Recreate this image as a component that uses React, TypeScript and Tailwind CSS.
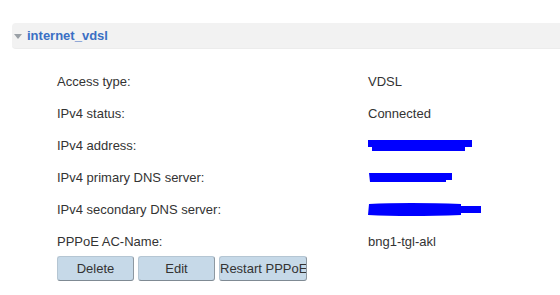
const rows: { label: string; value?: string; redact?: "address" | "primary" | "secondary" }[] = [
  { label: "Access type:", value: "VDSL" },
  { label: "IPv4 status:", value: "Connected" },
  { label: "IPv4 address:", redact: "address" },
  { label: "IPv4 primary DNS server:", redact: "primary" },
  { label: "IPv4 secondary DNS server:", redact: "secondary" },
  { label: "PPPoE AC-Name:", value: "bng1-tgl-akl" },
];

const Redaction = ({ kind }: { kind: "address" | "primary" | "secondary" }) => {
  if (kind === "address") {
    return (
      <svg width="110" height="14" viewBox="0 0 110 14">
        <path d="M0 1 L104 1 L104 8 L97 8 L97 12 L4 12 L4 8 L0 8 Z" fill="#0000ff" />
      </svg>
    );
  }
  if (kind === "primary") {
    return (
      <svg width="90" height="12" viewBox="0 0 90 12">
        <path d="M1 1 L84 1 L84 8 L78 8 L78 10 L2 10 Z" fill="#0000ff" />
      </svg>
    );
  }
  return (
    <svg width="120" height="18" viewBox="0 0 120 18">
      <path d="M1 3 Q40 1 93 3 L93 5 L113 5 L113 12 L93 12 L93 14 Q40 16 0 14 Z" fill="#0000ff" />
    </svg>
  );
};

const App: React.FC = () => {
  return (
    <div className="w-[560px] h-[295px] bg-white font-['Liberation_Sans',Arial,sans-serif] overflow-hidden pt-[23px]">
      <div className="ml-3 h-[26px] bg-[#f2f2f2] rounded-l-[4px] border-b border-[#ececec] flex items-center">
        <span className="ml-[2px] w-0 h-0 border-l-[4px] border-r-[4px] border-t-[5px] border-l-transparent border-r-transparent border-t-[#9aa0a6] mt-[1px]" />
        <span className="ml-[5px] text-[13px] font-bold text-[#3a6fc4]">internet_vdsl</span>
      </div>
      <div className="pl-[57px] pt-[17px]">
        {rows.map((r) => (
          <div key={r.label} className="h-8 flex items-center text-[13px] text-[#333]">
            <span className="w-[311px]">{r.label}</span>
            {r.value ? <span>{r.value}</span> : r.redact ? <Redaction kind={r.redact} /> : null}
          </div>
        ))}
        <div className="flex gap-1 -mt-[2px]">
          <button className="w-[77px] h-[25px] bg-[#c6d9e8] border border-[#b5c6d3] border-r-[#8d98a1] border-b-[#7f8a93] rounded-[3px] text-[13px] text-[#333]">
            Delete
          </button>
          <button className="w-[77px] h-[25px] bg-[#c6d9e8] border border-[#b5c6d3] border-r-[#8d98a1] border-b-[#7f8a93] rounded-[3px] text-[13px] text-[#333]">
            Edit
          </button>
          <button className="w-[88px] h-[25px] bg-[#c6d9e8] border border-[#b5c6d3] border-r-[#8d98a1] border-b-[#7f8a93] rounded-[3px] text-[13px] text-[#333] whitespace-nowrap overflow-hidden">
            Restart PPPoE
          </button>
        </div>
      </div>
    </div>
  );
};

export default App;
